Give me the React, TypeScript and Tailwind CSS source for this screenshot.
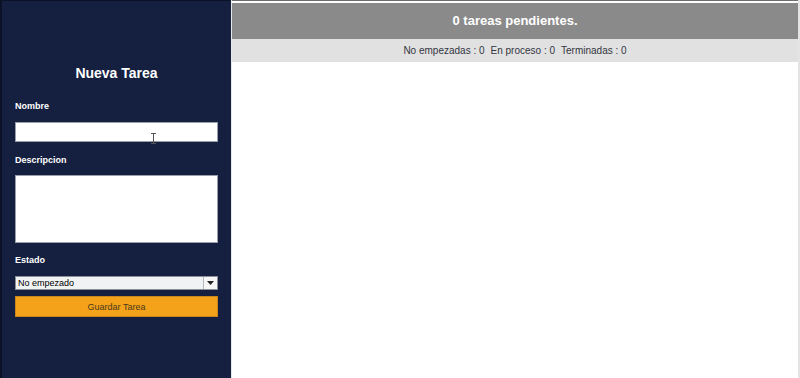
import { useState } from "react";

/* Left panel form */
function NuevaTareaForm() {
  const [estado, setEstado] = useState("No empezado");

  return (
    <aside className="flex h-full w-[231px] shrink-0 flex-col border-l-2 border-t border-[#0c1226] bg-[#151f3f] pl-[13px] pt-[63px] text-white">
      <h1 className="w-[203px] text-center text-[14px] font-bold leading-[18px]">Nueva Tarea</h1>

      <label className="mt-[18px] text-[9px] font-bold leading-[12px]">Nombre</label>
      <div className="relative mt-[10px]">
        <input className="block h-[20px] w-[203px] border border-[#9aa0ab] bg-white px-1 text-[10px] text-black outline-none" />
        {/* I-beam cursor */}
        <svg className="absolute left-[135px] top-[11px]" width="7" height="11" viewBox="0 0 7 11">
          <path d="M1 0.5h5M1 10.5h5M3.5 0.5v10" stroke="#555" strokeWidth="1" fill="none" />
        </svg>
      </div>

      <label className="mt-[12px] text-[9px] font-bold leading-[12px]">Descripcion</label>
      <textarea className="mt-[9px] block h-[68px] w-[203px] resize-none border border-[#9aa0ab] bg-white px-1 text-[10px] text-black outline-none" />

      <label className="mt-[11px] text-[9px] font-bold leading-[12px]">Estado</label>
      <div className="mt-[10px] flex h-[14px] w-[203px] border border-[#8a8f99] bg-[#f1f2f4] text-black">
        <span className="flex-1 pl-[2px] text-[9px] leading-[12px]">{estado}</span>
        <button
          onClick={() => setEstado(estado)}
          className="flex w-[14px] items-center justify-center border-l border-[#b5b8be] bg-[#f6f6f6]"
        >
          <svg width="7" height="4" viewBox="0 0 7 4">
            <path d="M0 0h7L3.5 4z" fill="#222" />
          </svg>
        </button>
      </div>

      <button className="mt-[6px] h-[21px] w-[203px] border border-[#c9861a] bg-[#f5a21b] text-[9px] leading-[12px] text-[#4a3a1a]">
        Guardar Tarea
      </button>
    </aside>
  );
}

export default function App() {
  return (
    <div className="flex h-[378px] w-[800px] overflow-hidden bg-white" style={{ fontFamily: '"Liberation Sans", Arial, sans-serif' }}>
      <NuevaTareaForm />

      {/* Right: summary */}
      <main className="flex min-w-0 flex-1 flex-col border-l border-[#e8e8e8] border-r-2 border-r-[#e4e4e4]">
        <div className="h-[3px] border-t border-[#6f6f6f] bg-white" />
        <div className="flex h-[36px] items-center justify-center bg-[#8b8a8b] text-[13px] font-bold text-white">
          0 tareas pendientes.
        </div>
        <div className="flex h-[23px] items-center justify-center gap-[6px] bg-[#e1e1e2] text-[10px] text-[#333640]">
          <span>No empezadas : 0</span>
          <span>En proceso : 0</span>
          <span>Terminadas : 0</span>
        </div>
        <div className="flex-1 bg-white" />
      </main>
    </div>
  );
}
